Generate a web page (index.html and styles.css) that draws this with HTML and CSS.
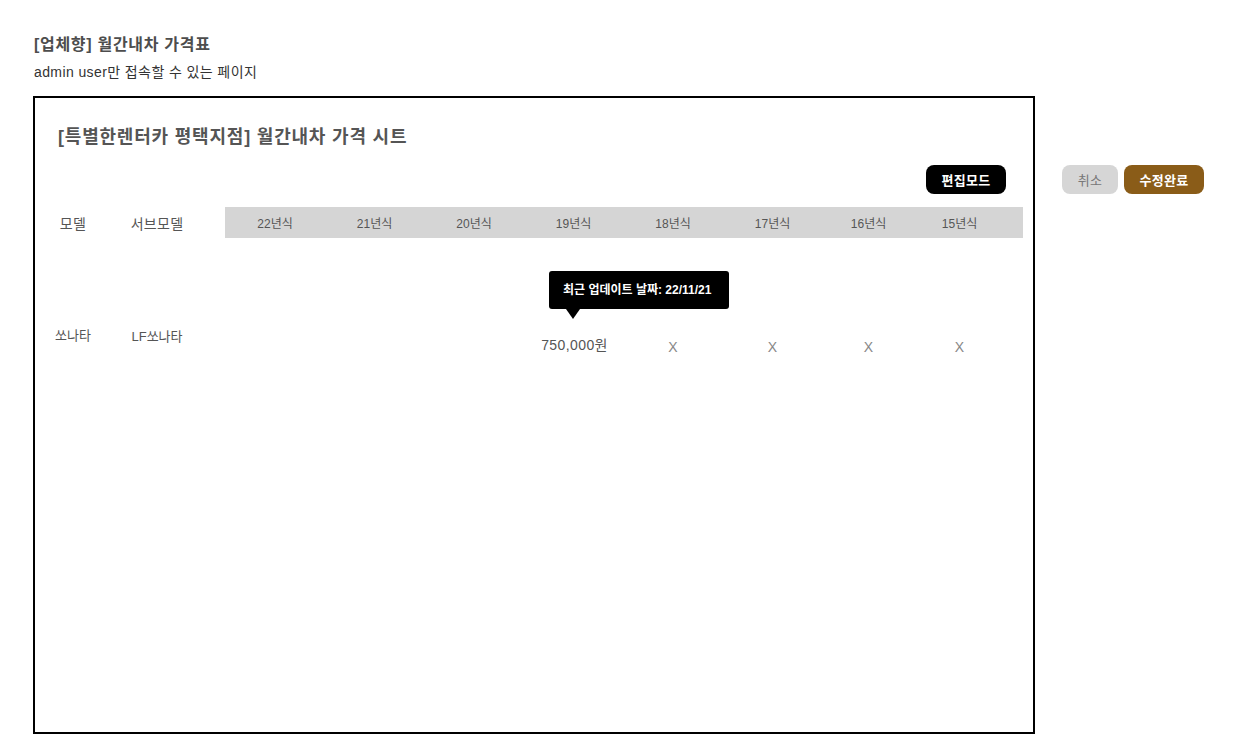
FILE: index.html
```html
<!DOCTYPE html>
<html lang="ko">
<head>
<meta charset="utf-8">
<title>월간내차 가격표</title>
<link rel="stylesheet" href="styles.css">
</head>
<body>
<div class="page">
  <h1 class="page-title">[업체향] 월간내차 가격표</h1>
  <p class="page-sub">admin user만 접속할 수 있는 페이지</p>
  <div class="layout">
    <section class="sheet">
      <h2 class="sheet-title">[특별한렌터카 평택지점] 월간내차 가격 시트</h2>
      <div class="toolbar">
        <button class="btn btn-black">편집모드</button>
      </div>
      <div class="row head">
        <div class="c-model">모델</div>
        <div class="c-sub">서브모델</div>
        <div class="years bar">
          <div>22년식</div><div>21년식</div><div>20년식</div><div>19년식</div>
          <div>18년식</div><div>17년식</div><div>16년식</div><div>15년식</div>
        </div>
      </div>
      <div class="row data">
        <div class="c-model name">쏘나타</div>
        <div class="c-sub name">LF쏘나타</div>
        <div class="years vals">
          <div></div><div></div><div></div>
          <div class="price">
            <div class="tip">최근 업데이트 날짜: 22/11/21</div>
            750,000원
          </div>
          <div class="x">X</div><div class="x">X</div><div class="x">X</div><div class="x">X</div>
        </div>
      </div>
    </section>
    <div class="side">
      <button class="btn btn-gray">취소</button>
      <button class="btn btn-brown">수정완료</button>
    </div>
  </div>
</div>
</body>
</html>
```
FILE: styles.css
```css
* { box-sizing: border-box; }
html, body { margin: 0; padding: 0; background: #fff; }
body {
  font-family: "Liberation Sans", "Noto Sans CJK KR", sans-serif;
  color: #444;
}
.page { padding: 35px 0 0 33px; }
.page-title {
  margin: 0 0 7px 1px;
  font-size: 16px;
  line-height: 20px;
  font-weight: bold;
  color: #4d4d4d;
  letter-spacing: 0.7px;
}
.page-sub {
  margin: 0 0 14px 1px;
  font-size: 14px;
  line-height: 20px;
  color: #333;
  letter-spacing: 0.4px;
}
.layout { display: flex; align-items: flex-start; }
.sheet {
  flex-shrink: 0;
  width: 1002px;
  height: 638px;
  border: 2px solid #000;
  padding: 28px 27px 0 23px;
  position: relative;
}
.sheet-title {
  margin: 0;
  font-size: 18px;
  line-height: 22px;
  font-weight: bold;
  color: #555;
  letter-spacing: 0.8px;
}
.toolbar {
  margin-top: 17px;
  display: flex;
  justify-content: flex-end;
}
.btn {
  border: 0;
  height: 29px;
  border-radius: 8px;
  font-family: inherit;
  font-size: 13px;
  font-weight: bold;
  padding: 0;
  cursor: pointer;
  letter-spacing: 0.3px;
}
.btn-black { width: 80px; background: #000; color: #fff; }
.btn-gray { width: 56px; background: #d6d6d6; color: #777; font-weight: normal; }
.btn-brown { width: 80px; background: #8a5c18; color: #fff; }
.side { margin: 69px 0 0 27px; display: flex; gap: 6px; flex-shrink: 0; }
.row { display: flex; margin-left: -23px; margin-right: -27px; }
.row > * { flex-shrink: 0; }
.head { margin-top: 13px; align-items: center; }
.c-model { width: 76px; text-align: center; }
.c-sub { width: 92px; text-align: center; }
.head .c-model, .head .c-sub { font-size: 14px; color: #555; letter-spacing: 0.3px; }
.years {
  margin-left: 22px;
  width: 798px;
  display: grid;
  grid-template-columns: 100px 99px 100px 99px 100px 99px 93px 89px;
}
.years > div { text-align: center; }
.bar {
  height: 31px;
  align-items: center;
  background: #d5d5d5;
  font-size: 12px;
  color: #555;
}
.data { align-items: flex-start; }
.name { padding-top: 89px; font-size: 13px; line-height: 18px; color: #555; }
.c-sub.name { padding-top: 90px; }
.vals > div { padding-top: 98px; font-size: 14px; line-height: 18px; color: #555; }
.vals > .x { padding-top: 100px; color: #888; font-size: 14px; }
.price { position: relative; padding-left: 2px; letter-spacing: 0.4px; }
.tip {
  position: absolute;
  top: 33px;
  left: 25px;
  width: 180px;
  height: 38px;
  background: #000;
  color: #fff;
  border-radius: 3px;
  font-size: 12px;
  font-weight: bold;
  line-height: 38px;
  text-align: left;
  padding-left: 14px;
  letter-spacing: 0;
}
.tip::after {
  content: "";
  position: absolute;
  left: 17px;
  bottom: -10px;
  border-left: 7px solid transparent;
  border-right: 7px solid transparent;
  border-top: 10px solid #000;
}
```
